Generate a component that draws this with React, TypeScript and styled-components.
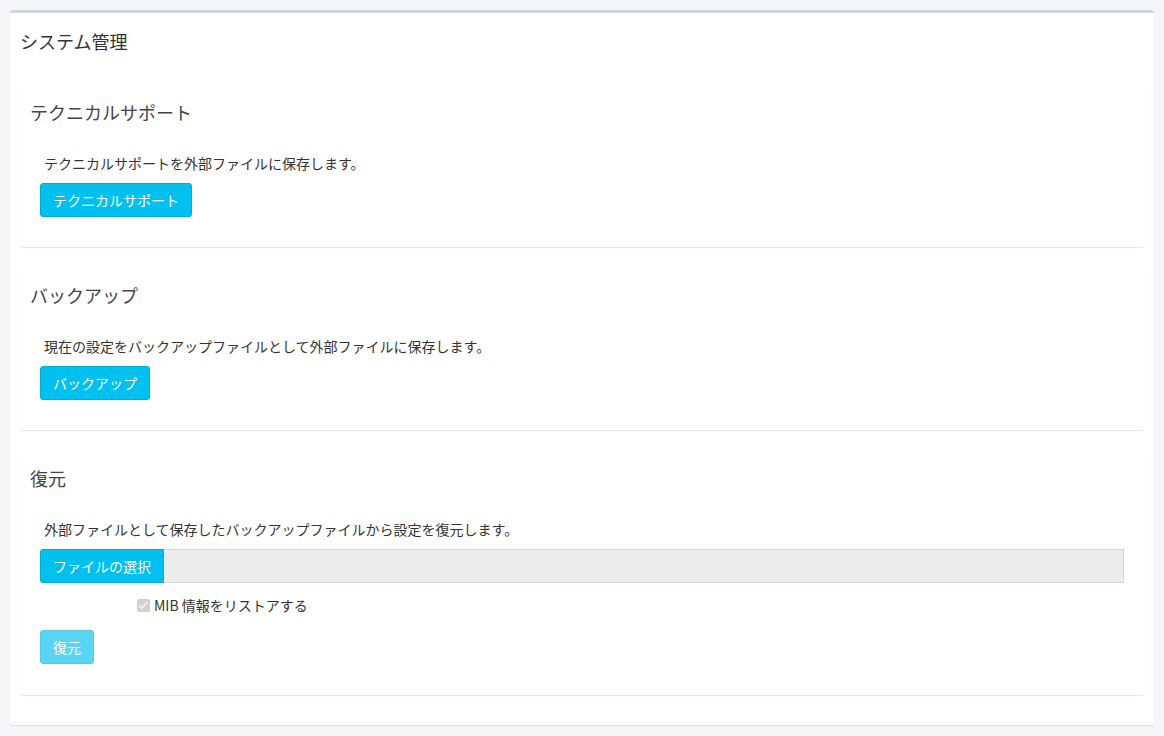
import React from "react";
import styled, { createGlobalStyle } from "styled-components";

const Global = createGlobalStyle`
  html, body {
    margin: 0;
    padding: 0;
    background: #f5f6fa;
  }
  body {
    font-family: "Noto Sans CJK JP", "Liberation Sans", sans-serif;
    font-size: 14px;
    color: #333;
  }
  * { box-sizing: border-box; }
`;

const Page = styled.div`
  padding: 10px;
  min-height: 736px;
`;

const Card = styled.div`
  background: #fff;
  border-top: 3px solid #d2d6de;
  border-radius: 3px;
  box-shadow: 0 1px 1px rgba(0, 0, 0, 0.1);
`;

const CardTitle = styled.h3`
  margin: 0;
  padding: 18px 10px 0 10px;
  font-size: 18px;
  line-height: 20px;
  font-weight: 400;
  color: #333;
`;

const CardBody = styled.div`
  padding: 33px 10px 10px 10px;
  display: flex;
  flex-direction: column;
  gap: 20px;
`;

const Section = styled.section`
  background: #fff;
  border-radius: 3px;
  box-shadow: 0 1px 1px rgba(0, 0, 0, 0.1);
  padding: 18px 20px 30px 20px;
  &:last-child {
    padding-bottom: 31px;
    margin-bottom: 20px;
  }
`;

const SectionTitle = styled.h4`
  margin: 0 0 31px -10px;
  font-size: 18px;
  line-height: 20px;
  font-weight: 400;
  color: #444;
`;

const Desc = styled.p`
  margin: 0 0 10px 4px;
  font-size: 14px;
  line-height: 20px;
  color: #333;
`;

const Button = styled.button<{ $disabled?: boolean }>`
  display: inline-block;
  font-family: inherit;
  font-size: 14px;
  line-height: 20px;
  padding: 6px 12px;
  border-radius: 3px;
  border: 1px solid #00acd6;
  background: #00c0ef;
  color: #fff;
  cursor: pointer;
  opacity: ${(p) => (p.$disabled ? 0.65 : 1)};
`;

const ButtonRow = styled.div`
  display: flex;
`;

const FileField = styled.label`
  display: flex;
  height: 34px;
  margin-top: 2px;
`;

const FileButton = styled.span`
  display: flex;
  align-items: center;
  padding: 0 12px;
  background: #00c0ef;
  border: 1px solid #00acd6;
  border-radius: 3px 0 0 3px;
  color: #fff;
  font-size: 14px;
  line-height: 20px;
`;

const FileName = styled.span`
  flex: 1;
  background: #ececec;
  border: 1px solid #d2d6de;
  border-left: none;
`;

const HiddenInput = styled.input`
  display: none;
`;

const CheckRow = styled.label`
  display: flex;
  align-items: center;
  gap: 4px;
  margin: 12px 0 15px 97px;
  font-size: 14px;
  line-height: 20px;
  color: #333;
`;

const Check = styled.input`
  margin: 0;
  width: 13px;
  height: 13px;
`;

export default function App() {
  return (
    <>
      <Global />
      <Page>
        <Card>
          <CardTitle>システム管理</CardTitle>
          <CardBody>
            <Section>
              <SectionTitle>テクニカルサポート</SectionTitle>
              <Desc>テクニカルサポートを外部ファイルに保存します。</Desc>
              <ButtonRow>
                <Button>テクニカルサポート</Button>
              </ButtonRow>
            </Section>
            <Section>
              <SectionTitle>バックアップ</SectionTitle>
              <Desc>現在の設定をバックアップファイルとして外部ファイルに保存します。</Desc>
              <ButtonRow>
                <Button>バックアップ</Button>
              </ButtonRow>
            </Section>
            <Section>
              <SectionTitle>復元</SectionTitle>
              <Desc>外部ファイルとして保存したバックアップファイルから設定を復元します。</Desc>
              <FileField>
                <FileButton>ファイルの選択</FileButton>
                <FileName />
                <HiddenInput type="file" />
              </FileField>
              <CheckRow>
                <Check type="checkbox" checked disabled readOnly />
                MIB 情報をリストアする
              </CheckRow>
              <ButtonRow>
                <Button $disabled disabled>復元</Button>
              </ButtonRow>
            </Section>
          </CardBody>
        </Card>
      </Page>
    </>
  );
}
